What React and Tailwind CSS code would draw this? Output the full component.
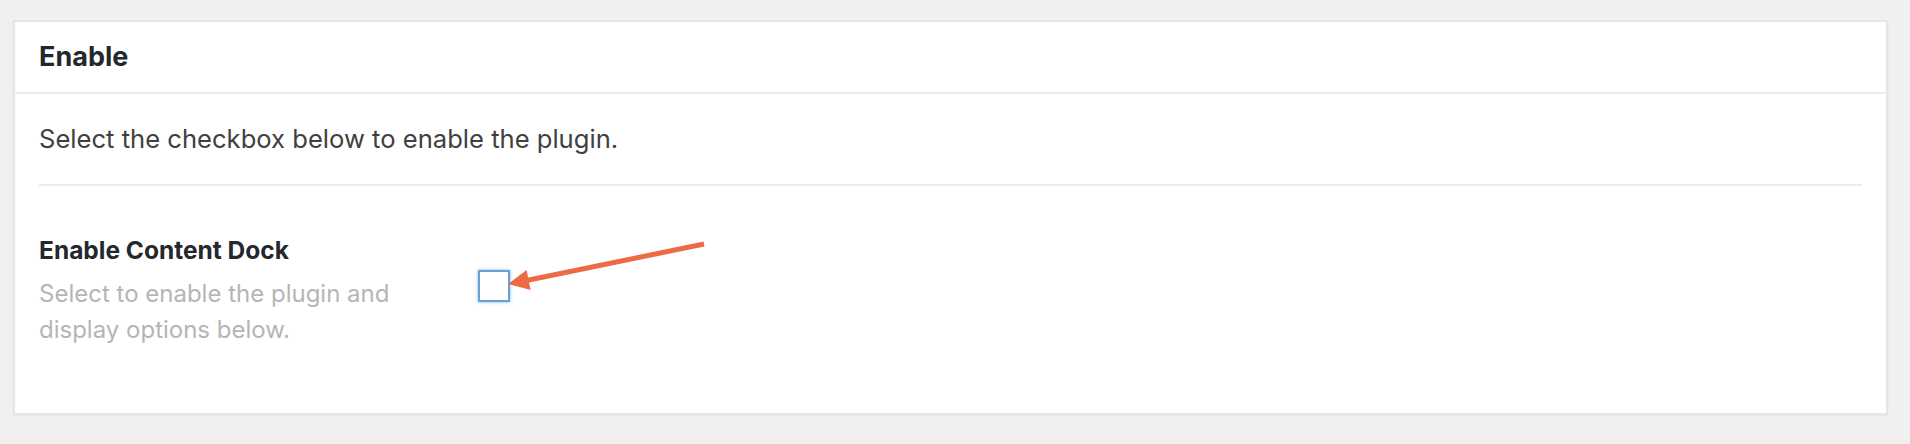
export default function App() {
  return (
    <div className="relative h-[444px] w-[1910px] bg-[#f0f0f0] pt-[20px] pl-[13px] pr-[22px] font-['Inter',sans-serif]">
      <div className="h-[395px] bg-white border-2 border-[#e6e6e6] shadow-[0_1px_2px_rgba(0,0,0,0.05)]">
        <div className="h-[72px] border-b-2 border-[#ececec] px-[24px] flex items-center">
          <h2 className="text-[27px] leading-[34px] font-bold text-[#23282d]">Enable</h2>
        </div>
        <div className="px-[24px]">
          <p className="pt-[27px] pb-[27px] text-[25.6px] leading-[36px] text-[#404040]">
            Select the checkbox below to enable the plugin.
          </p>
          <div className="h-[2px] bg-[#ececec]" />
          <div className="flex pt-[49px]">
            <div className="w-[439px] shrink-0">
              <div className="text-[24.5px] leading-[30px] font-bold text-[#23282d]">Enable Content Dock</div>
              <p className="mt-[11px] w-[390px] text-[24px] leading-[36px] text-[#b5b5b5]">
                Select to enable the plugin and display options below.
              </p>
            </div>
            <div className="pt-[35px]">
              <div className="w-[32px] h-[32px] border-2 border-[#6b9fd9] bg-white shadow-[0_0_3px_rgba(30,140,190,0.6)]" />
            </div>
          </div>
        </div>
      </div>
      <svg className="absolute left-0 top-0 pointer-events-none" width="1910" height="444" viewBox="0 0 1910 444">
        <line x1="704" y1="244" x2="524" y2="281" stroke="#ee6a45" strokeWidth="5" />
        <polygon points="508,284 526.6,270 530.6,290" fill="#ee6a45" />
      </svg>
    </div>
  );
}
